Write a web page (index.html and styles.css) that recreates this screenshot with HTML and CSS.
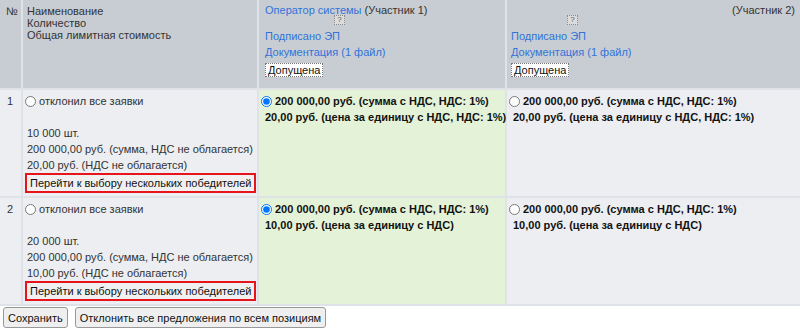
FILE: index.html
```html
<!DOCTYPE html>
<html lang="ru">
<head>
    <meta charset="UTF-8">
    <title>Выбор победителей</title>
    <link rel="stylesheet" href="styles.css">
</head>
<body>

<table class="offers">
    <colgroup>
        <col class="c-num">
        <col class="c-lot">
        <col class="c-part1">
        <col class="c-part2">
    </colgroup>
    <tr class="head">
        <td class="num">№</td>
        <td class="lot-head">
            Наименование<br>
            Количество<br>
            Общая лимитная стоимость
        </td>
        <td class="part part-1">
            <div class="part-name"><a href="#">Оператор системы</a> (Участник 1)</div>
            <div class="help help-1">?</div>
            <a class="doc" href="#">Подписано ЭП</a>
            <a class="doc" href="#">Документация (1 файл)</a>
            <span class="status">Допущена</span>
        </td>
        <td class="part">
            <div class="part-name right">(Участник 2)</div>
            <div class="help help-2">?</div>
            <a class="doc" href="#">Подписано ЭП</a>
            <a class="doc" href="#">Документация (1 файл)</a>
            <span class="status">Допущена</span>
        </td>
    </tr>

    <tr class="lot">
        <td class="num">1</td>
        <td class="lot-info">
            <label><input type="radio" name="lot1">отклонил все заявки</label>
            <div class="lot-data">
                10 000 шт.<br>
                200 000,00 руб. (сумма, НДС не облагается)<br>
                20,00 руб. (НДС не облагается)
            </div>
            <button type="button" class="multi">Перейти к выбору нескольких победителей</button>
        </td>
        <td class="offer win">
            <label><input type="radio" name="lot1" checked>200 000,00 руб. (сумма с НДС, НДС: 1%)</label>
            <div class="price">20,00 руб. (цена за единицу с НДС, НДС: 1%)</div>
        </td>
        <td class="offer">
            <label><input type="radio" name="lot1">200 000,00 руб. (сумма с НДС, НДС: 1%)</label>
            <div class="price">20,00 руб. (цена за единицу с НДС, НДС: 1%)</div>
        </td>
    </tr>

    <tr class="lot">
        <td class="num">2</td>
        <td class="lot-info">
            <label><input type="radio" name="lot2">отклонил все заявки</label>
            <div class="lot-data">
                20 000 шт.<br>
                200 000,00 руб. (сумма, НДС не облагается)<br>
                10,00 руб. (НДС не облагается)
            </div>
            <button type="button" class="multi">Перейти к выбору нескольких победителей</button>
        </td>
        <td class="offer win">
            <label><input type="radio" name="lot2" checked>200 000,00 руб. (сумма с НДС, НДС: 1%)</label>
            <div class="price">10,00 руб. (цена за единицу с НДС)</div>
        </td>
        <td class="offer">
            <label><input type="radio" name="lot2">200 000,00 руб. (сумма с НДС, НДС: 1%)</label>
            <div class="price">10,00 руб. (цена за единицу с НДС)</div>
        </td>
    </tr>
</table>

<div class="actions">
    <button type="button">Сохранить</button>
    <button type="button">Отклонить все предложения по всем позициям</button>
</div>

</body>
</html>
```

FILE: styles.css
```css
body {
    margin: 0;
    font-family: "Liberation Sans", Arial, sans-serif;
    font-size: 11px;
    color: #333;
    background-color: #fff;
}
a {
    color: #3273d8;
    text-decoration: none;
}
.offers {
    width: 804px;
    table-layout: fixed;
    border-collapse: separate;
    border-spacing: 2px;
    margin: -2px 0 0 -2px;
    background-color: #dfe2e6;
}
.c-num { width: 21px; }
.c-lot { width: 234px; }
.c-part1 { width: 246px; }
.c-part2 { width: 293px; }

.offers td {
    vertical-align: top;
    padding: 3px 4px;
    line-height: 16px;
}
.head td {
    background-color: #c8cdd4;
    height: 79px;
    padding-bottom: 4px;
}
.head .num {
    padding: 5px 0 0 6px;
    line-height: 12px;
}
.lot-head {
    line-height: 12px !important;
    padding-top: 5px !important;
}
.part-1 {
    padding-left: 6px !important;
}
.part-name {
    line-height: 14px;
}
.right {
    text-align: right;
    padding-right: 1px;
}
.help {
    width: 9px;
    height: 8px;
    margin-top: -2px;
    border: 1px dotted #888;
    background-color: #dcdcdc;
    font-size: 8px;
    line-height: 8px;
    text-align: center;
    color: #555;
}
.help-1 {
    margin-left: 69px;
}
.help-2 {
    margin-left: 56px;
}
.doc {
    display: block;
}
.doc:first-of-type {
    margin-top: 3px;
}
.status {
    display: inline-block;
    margin-top: 3px;
    padding: 0 2px;
    line-height: 12px;
    background-color: #fff;
    border: 1px dotted #777;
    color: #111;
}
.lot td {
    background-color: #eceef2;
}
.lot .num {
    padding-left: 7px;
    padding-right: 0;
}
.offers input[type="radio"] {
    width: 11px;
    height: 11px;
    margin: 0 3px 0 -2px;
    vertical-align: -2px;
}
.lot-data {
    margin-top: 16px;
}
.multi {
    display: block;
    margin: 0 0 0 -2px;
    padding: 0 3px;
    height: 20px;
    font-family: inherit;
    font-size: 11px;
    color: #111;
    background-color: #f0f0f0;
    border: 2px solid #e8141b;
    white-space: nowrap;
}
.offer {
    font-weight: bold;
    color: #111;
    white-space: nowrap;
}
.offers td.win {
    background-color: #e4f3d7;
}
.price {
    padding-left: 2px;
}
.actions {
    padding: 1px 3px;
}
.actions button {
    margin-right: 4px;
    padding: 0 4px;
    height: 21px;
    font-family: inherit;
    font-size: 11px;
    color: #111;
    background-color: #efefef;
    border: 1px solid #999;
    border-radius: 3px;
}
```
